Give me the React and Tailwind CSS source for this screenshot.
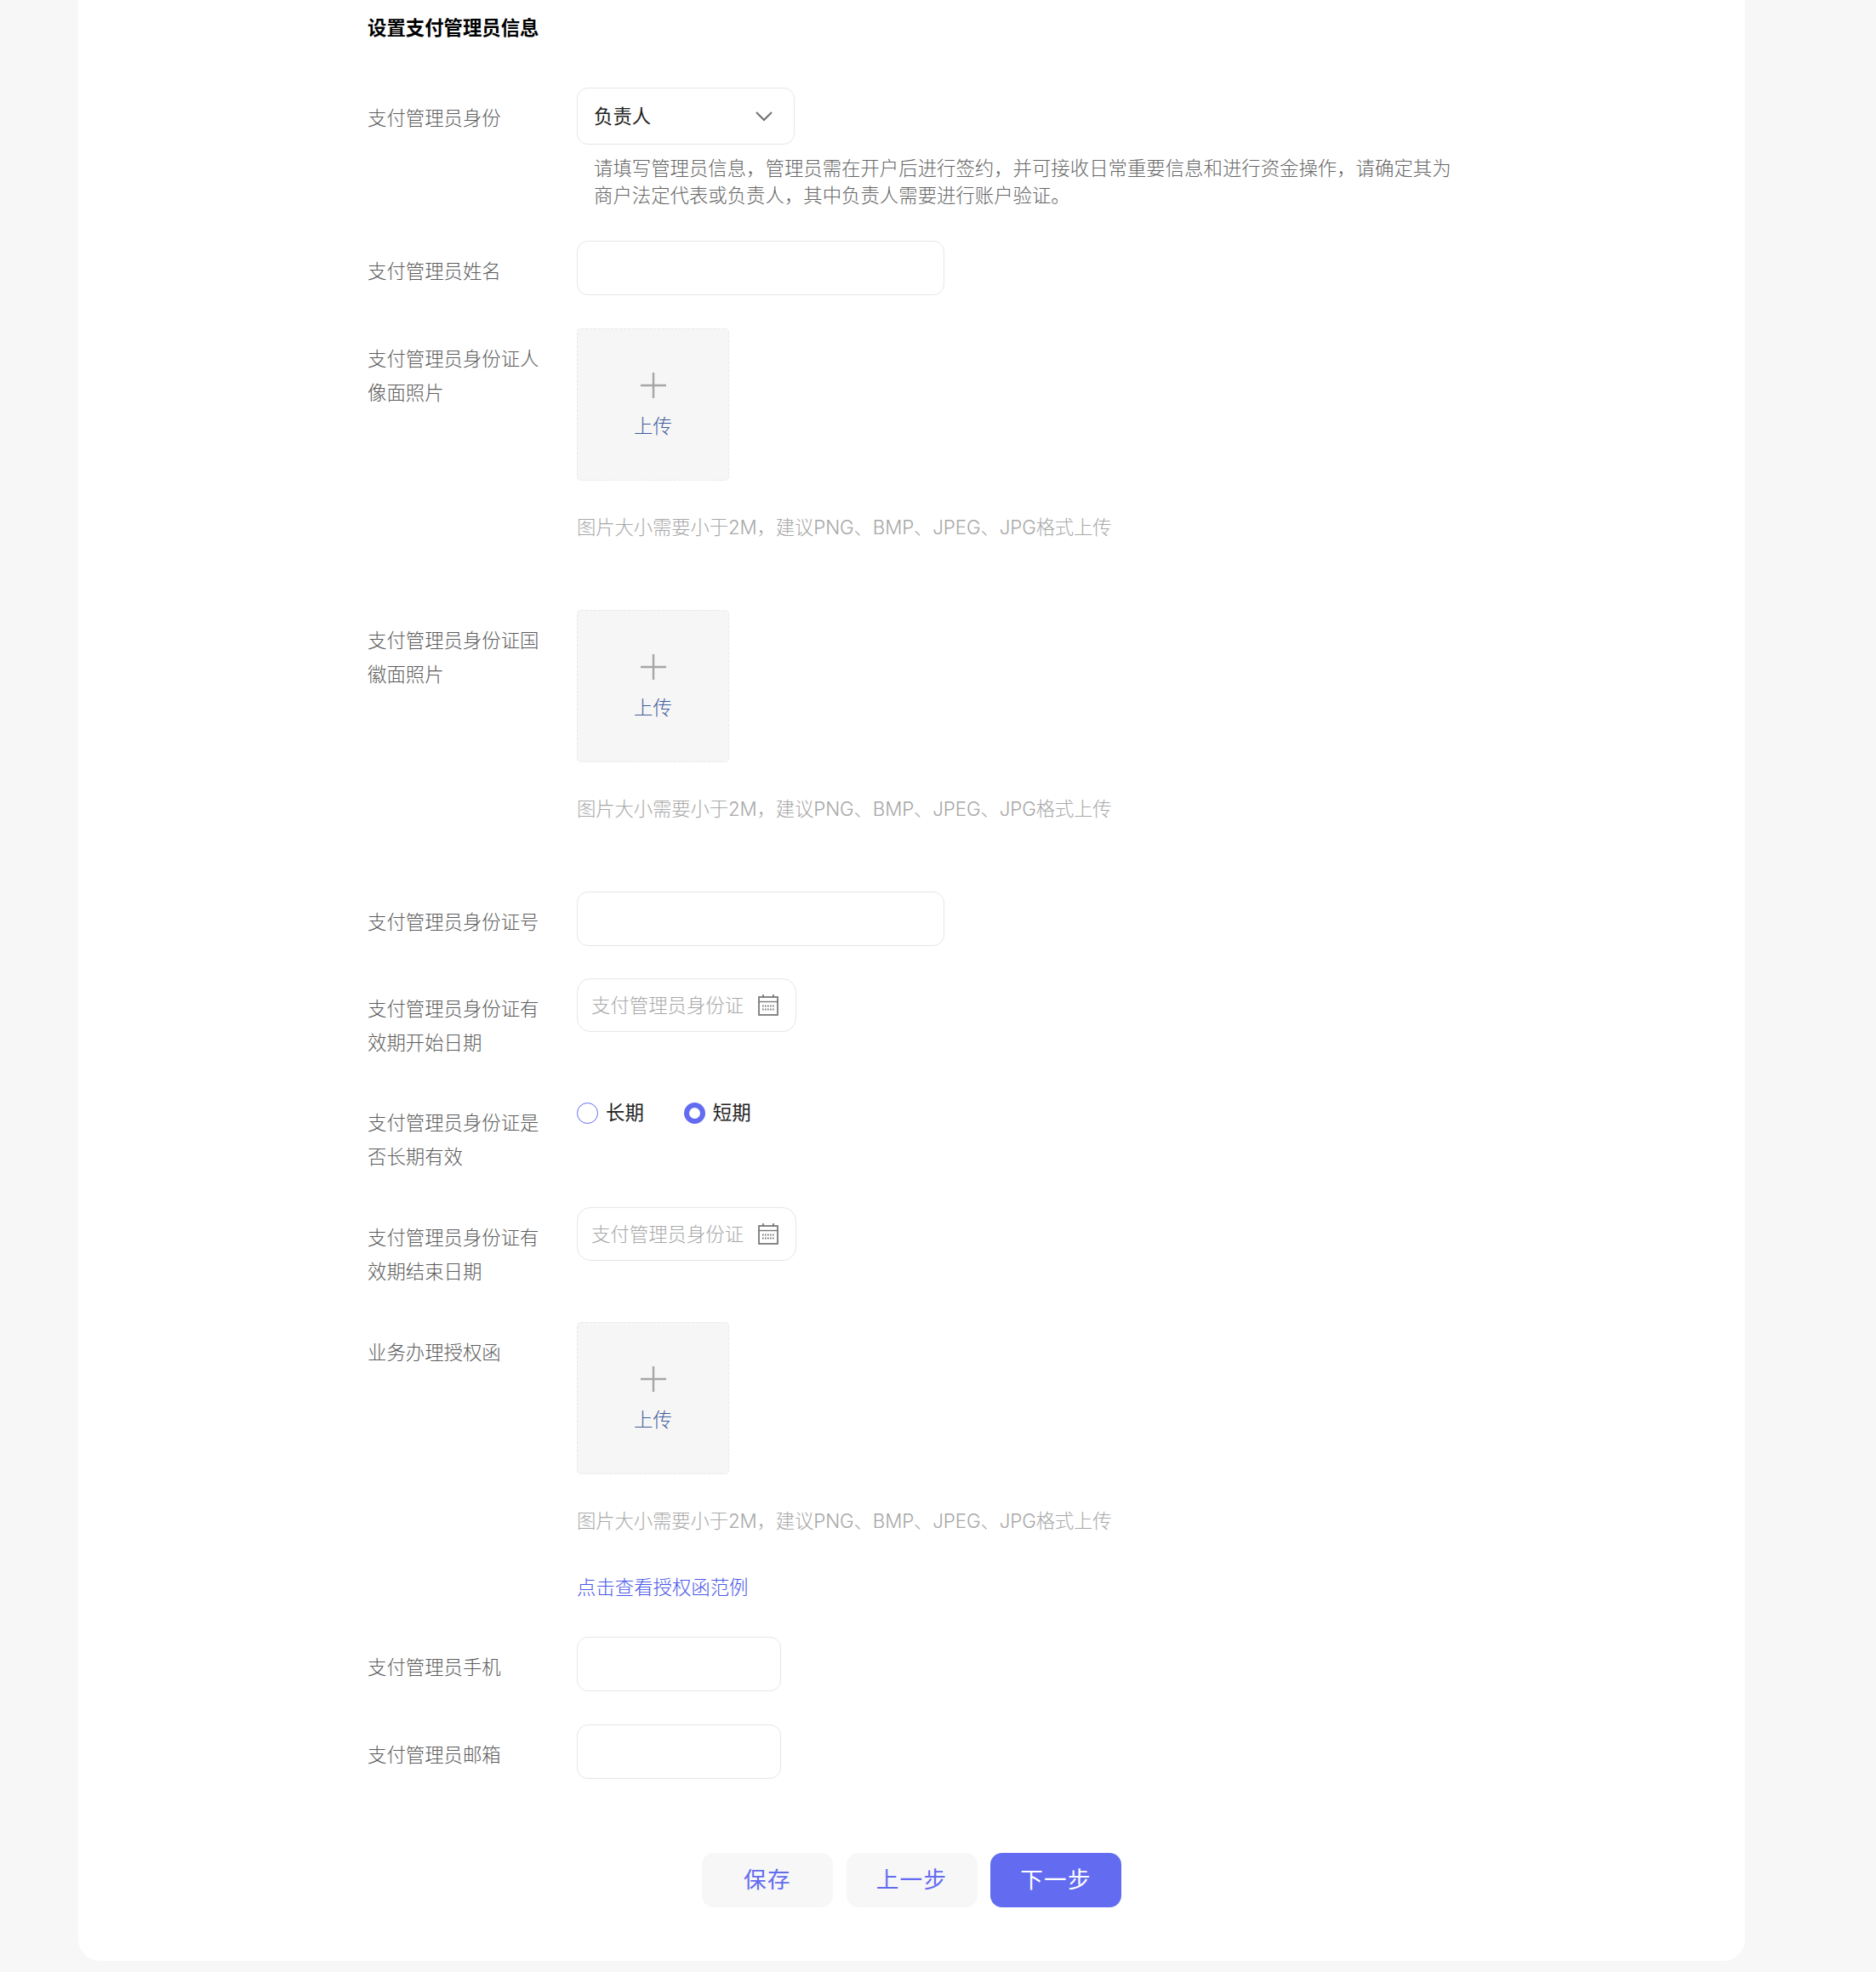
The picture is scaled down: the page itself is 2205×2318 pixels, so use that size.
import React from 'react';

const labelCls = "w-[246px] shrink-0 pr-[40px] pt-[16px] text-[22.4px] font-light leading-[40px] text-[#5c5c5c]";
const inputCls = "block h-[64px] rounded-[13px] border border-[#e6e6e6] bg-white";

const Row = ({ label, children, className = "" }) => (
    <div className={`flex ${className}`}>
        <div className={labelCls}>{label}</div>
        <div className="min-w-0 flex-1">{children}</div>
    </div>
);

const CalendarIcon = () => (
    <svg width="24" height="25" viewBox="0 0 24 25" fill="none" stroke="#7a7a7a" className="shrink-0">
        <rect x="1" y="3" width="22" height="21" strokeWidth="1.8" />
        <path d="M1 8.5h22" strokeWidth="1.4" />
        <path d="M6 0v4M18 0v4" strokeWidth="1.8" />
        <path d="M5 13.5h14M5 17.5h14" strokeWidth="1.8" strokeDasharray="1.6 1.4" />
    </svg>
);

const DateInput = ({ placeholder }) => (
    <div className="flex h-[63px] w-[258px] items-center rounded-[16px] border border-[#e6e6e6] bg-white pl-[16px]">
        <input
            readOnly
            placeholder={placeholder}
            className="w-[179.5px] bg-transparent text-[22.4px] font-light outline-none placeholder:text-[#a8a8a8]"
        />
        <div className="ml-[16px]"><CalendarIcon /></div>
    </div>
);

const Upload = () => (
    <div>
        <div className="flex h-[179px] w-[179px] flex-col items-center rounded-[5px] border border-dashed border-[#e8e8e8] bg-[#f6f6f6] pt-[51px]">
            <svg width="30" height="30" viewBox="0 0 30 30" stroke="#a6a6a6" strokeWidth="2.4">
                <path d="M15 0v30M0 15h30" />
            </svg>
            <span className="mt-[17px] text-[22.4px] font-light leading-[32px] text-[#3f5c9c]">上传</span>
        </div>
        <p className="mt-[39px] text-[22.4px] font-light leading-[32px] tracking-[-0.15px] text-[#a8a8a8]">图片大小需要小于2M，建议PNG、BMP、JPEG、JPG格式上传</p>
    </div>
);

const App = () => {
    return (
        <div className="h-[2318px] bg-[#f7f7f7] pl-[92px] font-['Inter','Noto_Sans_CJK_SC',sans-serif]">
            <div className="h-[2305px] w-[1959px] rounded-b-[26px] bg-white pl-[340px] pt-[17px]">
                <h2 className="text-[22.4px] font-bold leading-[32px] text-black">设置支付管理员信息</h2>

                <div className="mt-[54px] flex flex-col gap-[39px]">
                    <Row label="支付管理员身份" className="-mb-[2px]">
                        <div className="flex h-[67px] w-[256px] items-center justify-between rounded-[13px] border border-[#e6e6e6] bg-white pl-[19px] pr-[25px]">
                            <span className="text-[22.4px] text-[#222222]">负责人</span>
                            <svg width="20" height="12" viewBox="0 0 20 12" fill="none" stroke="#6f6f6f" strokeWidth="2">
                                <path d="M1 1l9 9 9-9" />
                            </svg>
                        </div>
                        <p className="mt-[12px] w-[1030px] pl-[20px] text-[22.4px] font-light leading-[32px] text-[#666666]">
                            请填写管理员信息，管理员需在开户后进行签约，并可接收日常重要信息和进行资金操作，请确定其为商户法定代表或负责人，其中负责人需要进行账户验证。
                        </p>
                    </Row>

                    <Row label="支付管理员姓名">
                        <div className={`${inputCls} w-[432px]`} />
                    </Row>

                    <Row label="支付管理员身份证人像面照片" className="mb-[42px]">
                        <Upload />
                    </Row>

                    <Row label="支付管理员身份证国徽面照片" className="mb-[42px]">
                        <Upload />
                    </Row>

                    <Row label="支付管理员身份证号" className="-mb-[1px]">
                        <div className={`${inputCls} w-[432px]`} />
                    </Row>

                    <Row label="支付管理员身份证有效期开始日期" className="-mb-[1px]">
                        <DateInput placeholder="支付管理员身份证有效期开始日期" />
                    </Row>

                    <Row label="支付管理员身份证是否长期有效">
                        <div className="flex h-[48px] items-center text-[22.4px] text-[#222222]">
                            <span className="h-[25px] w-[25px] rounded-full border border-[#636bf0] bg-white" />
                            <span className="ml-[9px]">长期</span>
                            <span className="ml-[47.5px] h-[25px] w-[25px] rounded-full border-[6px] border-[#636bf0] bg-white" />
                            <span className="ml-[8.5px]">短期</span>
                        </div>
                    </Row>

                    <Row label="支付管理员身份证有效期结束日期">
                        <DateInput placeholder="支付管理员身份证有效期结束日期" />
                    </Row>

                    <Row label="业务办理授权函">
                        <Upload />
                        <a className="mt-[46px] block text-[22.4px] font-light leading-[32px] text-[#4a58e8]">点击查看授权函范例</a>
                        <div className="h-[3px]" />
                    </Row>

                    <Row label="支付管理员手机">
                        <div className={`${inputCls} w-[240px]`} />
                    </Row>

                    <Row label="支付管理员邮箱">
                        <div className={`${inputCls} w-[240px]`} />
                    </Row>
                </div>

                <div className="ml-[393px] mt-[86.5px] flex gap-[15.5px] text-[26.6px] tracking-[1.3px]">
                    <button className="h-[64px] w-[154px] rounded-[14px] bg-[#f7f7f7] text-[#636bf0]">保存</button>
                    <button className="h-[64px] w-[154px] rounded-[14px] bg-[#f7f7f7] text-[#636bf0]">上一步</button>
                    <button className="h-[64px] w-[154px] rounded-[14px] bg-[#636bf0] text-white">下一步</button>
                </div>
            </div>
        </div>
    );
};

export default App;
